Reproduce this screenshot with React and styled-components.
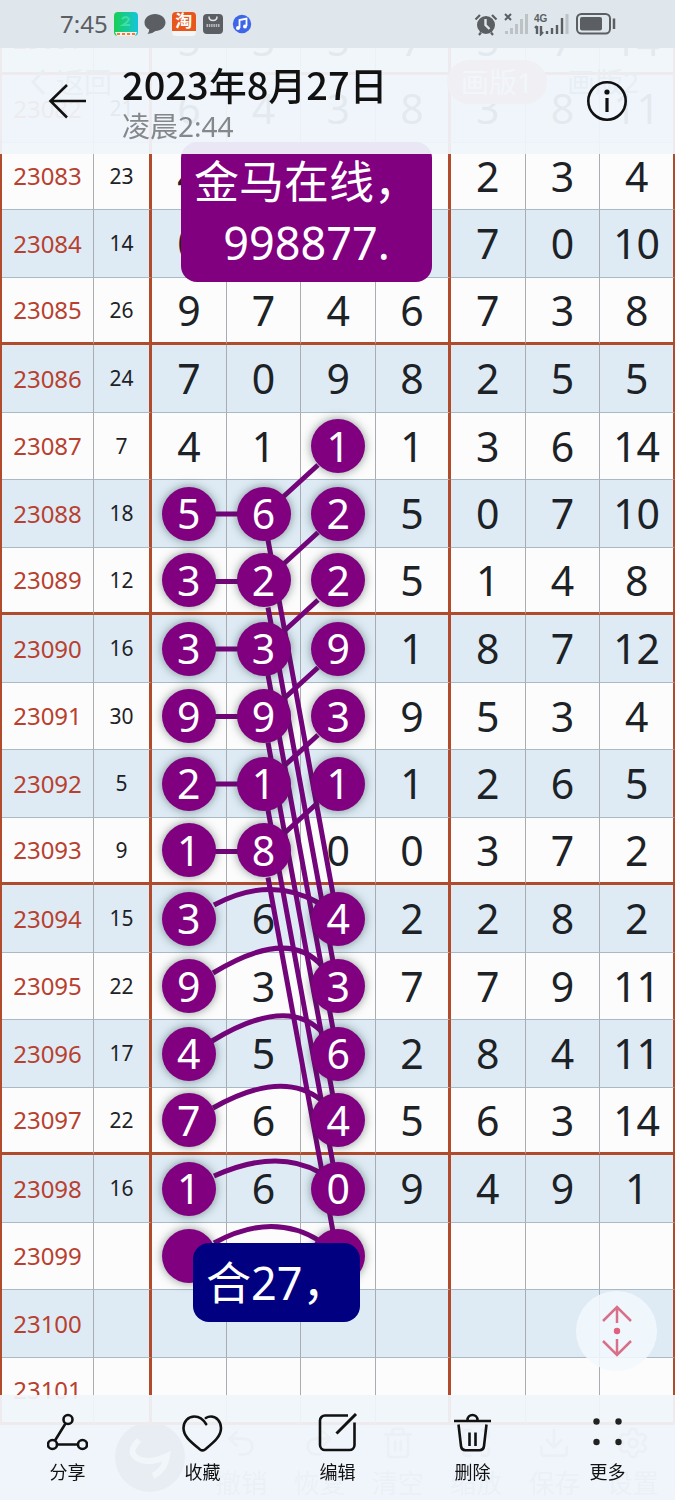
import React from "react";
import styled, { createGlobalStyle, css } from 'styled-components';
import { Undo2, Redo2, Trash2, Maximize, Download, Settings } from 'lucide-react';

const GlobalStyle = createGlobalStyle`
  * {
    box-sizing: border-box;
  }
  body {
    margin: 0;
    background: #edf3fa;
    font-family: 'Noto Sans', 'Noto Sans CJK SC', sans-serif;
    color: #1c2226;
  }
  button {
    margin: 0;
    padding: 0;
    border: none;
    background: none;
    font: inherit;
    color: inherit;
  }
`;

const purple = '#800080';
const brick = '#b04c2b';

// period, sum, then the seven digits
const rows = [
  ['23081', '21', 5, 3, 5, 7, 5, 7, 14],
  ['23082', '21', 6, 4, 3, 8, 3, 8, 11],
  ['23083', '23', 4, '', '', '', 2, 3, 4],
  ['23084', '14', 0, '', '', '', 7, 0, 10],
  ['23085', '26', 9, 7, 4, 6, 7, 3, 8],
  ['23086', '24', 7, 0, 9, 8, 2, 5, 5],
  ['23087', '7', 4, 1, 1, 1, 3, 6, 14],
  ['23088', '18', 5, 6, 2, 5, 0, 7, 10],
  ['23089', '12', 3, 2, 2, 5, 1, 4, 8],
  ['23090', '16', 3, 3, 9, 1, 8, 7, 12],
  ['23091', '30', 9, 9, 3, 9, 5, 3, 4],
  ['23092', '5', 2, 1, 1, 1, 2, 6, 5],
  ['23093', '9', 1, 8, 0, 0, 3, 7, 2],
  ['23094', '15', 3, 6, 4, 2, 2, 8, 2],
  ['23095', '22', 9, 3, 3, 7, 7, 9, 11],
  ['23096', '17', 4, 5, 6, 2, 8, 4, 11],
  ['23097', '22', 7, 6, 4, 5, 6, 3, 14],
  ['23098', '16', 1, 6, 0, 9, 4, 9, 1],
  ['23099', '', '', '', '', '', '', '', ''],
  ['23100', '', '', '', '', '', '', '', ''],
  ['23101', '', '', '', '', '', '', '', ''],
];

// which digit columns carry a ball
const balls = {
  23087: [2],
  23088: [0, 1, 2],
  23089: [0, 1, 2],
  23090: [0, 1, 2],
  23091: [0, 1, 2],
  23092: [0, 1, 2],
  23093: [0, 1],
  23094: [0, 2],
  23095: [0, 2],
  23096: [0, 2],
  23097: [0, 2],
  23098: [0, 2],
  23099: [0, 2],
};

const arcs = [
  'M214 905 Q270 875 319 903',
  'M213 973 Q288 927 322 966',
  'M212 1041 Q286 996 321 1031',
  'M213 1108 Q282 1069 321 1100',
  'M214 1176 Q276 1148 319 1172',
  'M214 1243 Q272 1211 320 1241',
];

const Page = styled.div`
  position: relative;
  min-height: 100vh;
  padding-top: 8px;
  background: #fcfcfc;
`;

const Board = styled.main`
  position: relative;
`;

const Table = styled.table`
  width: 100%;
  table-layout: fixed;
  border-collapse: separate;
  border-spacing: 0;
  border-left: 2px solid ${brick};
`;

const Col = styled.col`
  width: ${props => props.$w};
`;

const Row = styled.tr`
  height: 67px;
  background: #fcfcfc;

  &:nth-child(even) {
    height: 68px;
    background: #deebf5;
  }
`;

const cell = css`
  padding: 0;
  text-align: center;
  vertical-align: middle;
  line-height: 1;
  border-right: 1px solid #a9acb0;
  border-bottom: 1px solid #a9bac4;
  ${props => props.$edge && css`border-right: 3px solid ${brick};`}
  ${props => props.$group && css`border-bottom: 3px solid ${brick};`}

  &:last-child {
    border-right: 2px solid ${brick};
  }
`;

const Period = styled.th`
  ${cell}
  font-size: 24px;
  font-weight: 400;
  color: #b8402f;
`;

const Sum = styled.td`
  ${cell}
  font-size: 21px;
`;

const Digit = styled.td`
  ${cell}
  font-size: 41px;
`;

// balls stay above the connecting lines so the digits are never crossed
const Ball = styled.span`
  position: relative;
  z-index: 1;
  display: flex;
  justify-content: center;
  align-items: center;
  width: 54px;
  height: 54px;
  margin: 0 auto;
  border-radius: 50%;
  background: ${purple};
  color: #fff;
  box-shadow: 0 0 10px rgba(20, 50, 40, 0.5);
`;

const Lines = styled.svg`
  position: absolute;
  inset: 0;
  width: 100%;
  height: 100%;
  fill: none;
  stroke: #74047a;
  stroke-width: 5;
`;

const Note = styled.div`
  position: absolute;
  z-index: 2;
  left: ${props => props.$left}px;
  top: ${props => props.$top}px;
  padding: 9px 13px;
  border-radius: 16px;
  background: ${props => props.$color};
  color: #fff;
  font-size: 45px;
  line-height: 61px;
  text-align: center;
`;

const ScrollButton = styled.button`
  position: absolute;
  right: 18px;
  bottom: 54px;
  width: 81px;
  height: 80px;
  border-radius: 50%;
  background: rgba(243, 248, 253, 0.88);

  svg {
    display: block;
    margin: 0 auto;
  }
`;

const AppNav = styled.nav`
  position: absolute;
  top: 60px;
  left: 30px;
  right: 22px;
  display: flex;
  align-items: center;
  gap: 6px;
  font-size: 28px;
  line-height: 44px;
`;

const AppBack = styled.button`
  display: flex;
  align-items: center;
  gap: 10px;
  margin-right: auto;
  color: #5f7380;
`;

const AppTab = styled.button`
  padding: 0 14px;
  border-radius: 22px;
  color: ${props => (props.$on ? '#fff' : '#5f7380')};
  background: ${props => (props.$on ? '#ee8070' : 'transparent')};
`;

const AppTools = styled.div`
  display: flex;
  align-items: flex-end;
  height: 75px;
  padding: 0 3px 0 115px;
  background: #e2eef8;
`;

const AppLogo = styled.span`
  width: 70px;
  height: 70px;
  margin: 0 17px 8px 0;
  border-radius: 50%;
  background: #56616c;
`;

const AppTool = styled.button`
  flex: 1;
  display: flex;
  flex-direction: column;
  align-items: center;
  gap: 6px;
  font-size: 26px;
  line-height: 34px;
  color: #8799a6;
`;

const Top = styled.div`
  position: fixed;
  z-index: 3;
  top: 0;
  left: 0;
  right: 0;
`;

const StatusBar = styled.div`
  display: flex;
  justify-content: space-between;
  align-items: center;
  height: 48px;
  padding: 0 59px 0 60px;
  background: #dfe6ec;
  color: #5b5f63;
  font-size: 24px;
  line-height: 48px;
`;

const StatusGroup = styled.div`
  display: flex;
  align-items: center;
  gap: 6px;

  svg {
    display: block;
  }
`;

const Taobao = styled.span`
  width: 24px;
  height: 24px;
  border-radius: 4px;
  background: linear-gradient(#e8561c 80%, #f4f6f8 80%);
  color: #fff;
  font-size: 17px;
  font-weight: 700;
  line-height: 18px;
  text-align: center;
`;

const Header = styled.header`
  display: flex;
  align-items: center;
  gap: 35px;
  height: 106px;
  padding: 0 47px;
  background: rgba(240, 245, 251, 0.94);
`;

const IconButton = styled.button`
  height: 40px;

  svg {
    display: block;
  }
`;

const Titles = styled.div`
  flex: 1;
  padding-top: 6px;
`;

const Title = styled.h1`
  margin: 0;
  font-family: 'Noto Sans CJK SC', sans-serif;
  font-size: 38px;
  font-weight: 500;
  line-height: 44px;
  color: #111;
`;

const Subtitle = styled.p`
  margin: 0;
  font-size: 28px;
  line-height: 40px;
  color: #85888b;
`;

const Footer = styled.footer`
  position: fixed;
  z-index: 3;
  left: 0;
  right: 0;
  bottom: 0;
  display: grid;
  grid-template-columns: repeat(5, 1fr);
  height: 105px;
  background: rgba(240, 245, 251, 0.94);
`;

const Action = styled.button`
  display: flex;
  flex-direction: column;
  align-items: center;
  gap: 7px;
  padding-top: 18px;
  font-size: 18px;
  line-height: 24px;
  color: #111;

  svg {
    fill: none;
    stroke: #111;
    stroke-width: 2.6;
  }
`;

const tools = [
  ['撤销', Undo2],
  ['恢复', Redo2],
  ['清空', Trash2],
  ['缩放', Maximize],
  ['保存', Download],
  ['设置', Settings],
];

const actions = [
  {
    label: '分享',
    icon: (
      <>
        <circle cx="21" cy="6.5" r="4.5" />
        <circle cx="5.5" cy="31.5" r="4.5" />
        <circle cx="35.5" cy="31.5" r="4.5" />
        <path d="M18.5 10.5 8 27.5M10 31.5h21" />
      </>
    ),
  },
  {
    label: '收藏',
    icon: (
      <path
        strokeLinecap="round"
        d="M24.2 11.2C21 6 17 3.5 12.5 3.5 6 3.5 1.5 8.5 1.5 15 1.5 23.5 9 29 18 36.5q2.5 1.8 5 0C32 29 39 23.5 39 15 39 8.5 34.5 3.5 29 3.5q-3 0-5.2 1.5"
      />
    ),
  },
  {
    label: '编辑',
    icon: (
      <>
        <path d="M31 2.5H8a5 5 0 0 0-5 5V32a5 5 0 0 0 5 5h24.5a5 5 0 0 0 5-5V9.5" />
        <path strokeWidth="3" d="M39 1 19.5 20.5" />
      </>
    ),
  },
  {
    label: '删除',
    icon: (
      <>
        <path d="M2 8h37M15.5 8v-1a5 5 0 0 1 10 0v1" />
        <path d="M6.5 11.5 9 33q.5 4.2 4.5 4.2h14q4 0 4.5-4.2l2.5-21.5M17.5 19.5V33M23.5 19.5V33" />
      </>
    ),
  },
  {
    label: '更多',
    icon: (
      <g fill="#222" stroke="none">
        <circle cx="9.5" cy="8.5" r="3.2" />
        <circle cx="31.5" cy="8.5" r="3.2" />
        <circle cx="9.5" cy="29" r="3.2" />
        <circle cx="31.5" cy="29" r="3.2" />
      </g>
    ),
  },
];

const BoardLines = () => (
  <Lines viewBox="0 8 675 1417" preserveAspectRatio="none" aria-hidden="true">
    {[0, 1, 2, 3, 4, 5].map((i) => (
      <path
        key={i}
        transform={`translate(0 ${i * 67.5})`}
        d="M214 514h24M283 497 318 465M268 540 333 894"
      />
    ))}
    {arcs.map((d) => <path key={d} d={d} />)}
  </Lines>
);

const StatusIcons = () => (
  <StatusGroup>
    <svg width="24" height="24" viewBox="0 0 24 24">
      <circle cx="12" cy="13" r="9" fill="#5b5f63" />
      <path d="M1.5 7.5 6 3M22.500 7.500 18 3M5 23l2-2.500M19 23l-2-2.500" stroke="#5b5f63" strokeWidth="2.2" />
      <path d="M11.5 7v6l4 4" fill="none" stroke="#dfe6ec" strokeWidth="2.4" />
    </svg>
    <svg width="24" height="24" viewBox="0 0 24 24">
      <path d="M1 2l6 6M7 2 1 8" stroke="#5b5f63" strokeWidth="2" />
      <path d="M2.5 22v-3M7.5 22v-6M12.5 22v-10M17.5 22V7M22.5 22V2" stroke="#bcc2c6" strokeWidth="3" />
    </svg>
    <svg width="36" height="24" viewBox="0 0 36 24">
      <text x="0" y="10" fontFamily="Liberation Sans, sans-serif" fontSize="10" fontWeight="700" fill="#5b5f63">4G</text>
      <path d="M3 14v8M1 16l2-2M7 14v8l2-2M13 22v-3M18 22v-6M23 22v-9M28 22V6" fill="none" stroke="#5b5f63" strokeWidth="2.4" />
      <path d="M33 22V2" stroke="#bcc2c6" strokeWidth="3" />
    </svg>
    <svg width="40" height="22" viewBox="0 0 40 22">
      <rect x="1" y="1" width="33" height="19.5" rx="4.5" fill="none" stroke="#5b5f63" strokeWidth="2" />
      <rect x="4" y="4" width="22" height="13.5" rx="2" fill="#5b5f63" />
      <path d="M38 5.5v10.5" stroke="#5b5f63" strokeWidth="2.5" />
    </svg>
  </StatusGroup>
);

const StatusApps = () => (
  <StatusGroup>
    <span>7:45</span>
    <svg width="24" height="24" viewBox="0 0 24 24">
      <defs>
        <linearGradient id="leaf">
          <stop offset="0" stopColor="#19cf52" />
          <stop offset="1" stopColor="#16c4dc" />
        </linearGradient>
      </defs>
      <rect width="24" height="24" rx="4" fill="url(#leaf)" />
      <path d="M8 7q4-4 7 0-1 3-6 6h7" fill="none" stroke="#3fe0a0" strokeWidth="2" />
      <path d="M1 20h22l-2 4H3z" fill="#f7efe6" />
      <path d="M3 22h18" stroke="#ee7a3c" strokeWidth="2" strokeDasharray="3 2" />
    </svg>
    <svg width="22" height="22" viewBox="0 0 22 22">
      <path d="M11 1c6 0 10.5 3.8 10.5 8.5S17 18 11.5 18Q8 21 3.500 21q1.800-2 1.700-4.500Q.5 14 .5 9.5C.5 4.800 5 1 11 1z" fill="#5b5f63" />
    </svg>
    <Taobao>淘</Taobao>
    <svg width="22" height="22" viewBox="0 0 22 22">
      <rect x="1" y="1" width="20" height="20" rx="4" fill="#5b5f63" />
      <path d="M7 3.500q0 4 4 4t4-4" fill="none" stroke="#dfe6ec" strokeWidth="1.5" />
      <path d="M4.500 12.500h13" stroke="#b5babe" strokeWidth="3" strokeDasharray="1.5 .8" />
    </svg>
    <svg width="24" height="24" viewBox="0 0 24 24">
      <circle cx="12" cy="12" r="9.2" fill="#3f66e8" />
      <path d="M9.500 16V8l7-1.500V14" fill="none" stroke="#fff" strokeWidth="1.8" />
      <circle cx="8" cy="16" r="2" fill="#fff" />
      <circle cx="15" cy="14.5" r="2" fill="#fff" />
    </svg>
  </StatusGroup>
);

const App = () => {
  return (
    <>
      <GlobalStyle />
      <Page>
        <Board>
          <Table>
            <colgroup>
              <Col $w="92px" />
              <Col $w="58px" />
              {[0, 1, 2, 3, 4, 5, 6].map((i) => <Col key={i} $w="auto" />)}
            </colgroup>
            <tbody>
              {rows.map(([period, sum, ...digits], r) => {
                const group = r % 4 === 0;
                return (
                  <Row key={period}>
                    <Period scope="row" $group={group}>{period}</Period>
                    <Sum $edge $group={group}>{sum}</Sum>
                    {digits.map((d, i) => (
                      <Digit key={i} $edge={i === 3} $group={group}>
                        {balls[period]?.includes(i) ? <Ball>{d}</Ball> : d}
                      </Digit>
                    ))}
                  </Row>
                );
              })}
            </tbody>
          </Table>
          <BoardLines />
          <Note $left={181} $top={134} $color={purple}>
            金马在线，<br />998877.
          </Note>
          <Note $left={193} $top={1235} $color="#000080">合27，</Note>
          <ScrollButton aria-label="滚动">
            <svg width="32" height="54" viewBox="0 0 32 54" fill="none" stroke="#d9708a" strokeWidth="2.5">
              <path d="M2 17 16 3l14 14M16 3v16M2 37l14 14 14-14M16 51V35" />
              <circle cx="16" cy="27" r="3.2" fill="#e0607f" stroke="none" />
            </svg>
          </ScrollButton>
        </Board>
        <AppNav inert>
          <AppBack>
            <svg width="16" height="28" viewBox="0 0 16 28" fill="none" stroke="#5f7380" strokeWidth="3">
              <path d="M14 2 3 14l11 12" />
            </svg>
            返回
          </AppBack>
          <AppTab $on>画版1</AppTab>
          <AppTab>画版2</AppTab>
        </AppNav>
        <AppTools inert>
          <AppLogo>
            <svg width="70" height="70" viewBox="0 0 70 70" fill="none" stroke="#fff" strokeWidth="6">
              <path d="M24 18q-14 14 2 20 12 3 26-4-2 14-14 20" />
            </svg>
          </AppLogo>
          {tools.map(([label, Icon]) => (
            <AppTool key={label}>
              <Icon size={34} />
              {label}
            </AppTool>
          ))}
        </AppTools>
      </Page>

      <Top>
        <StatusBar>
          <StatusApps />
          <StatusIcons />
        </StatusBar>
        <Header>
          <IconButton aria-label="返回">
            <svg width="40" height="40" viewBox="0 0 40 40" fill="none" stroke="#111" strokeWidth="2.6">
              <path d="M39 20H3M20 4 3.500 20 20 36.500" />
            </svg>
          </IconButton>
          <Titles>
            <Title>2023年8月27日</Title>
            <Subtitle>凌晨2:44</Subtitle>
          </Titles>
          <IconButton aria-label="详情">
            <svg width="42" height="40" viewBox="0 0 42 40" fill="none" stroke="#111" strokeWidth="2.6">
              <circle cx="21" cy="20" r="18.7" />
              <path d="M21 17v14" strokeWidth="3.2" />
              <circle cx="21" cy="11" r="2.6" fill="#111" stroke="none" />
            </svg>
          </IconButton>
        </Header>
      </Top>

      <Footer>
        {actions.map((a) => (
          <Action key={a.label}>
            <svg width="41" height="40" viewBox="0 0 41 40">{a.icon}</svg>
            {a.label}
          </Action>
        ))}
      </Footer>
    </>
  );
};

export default App;
